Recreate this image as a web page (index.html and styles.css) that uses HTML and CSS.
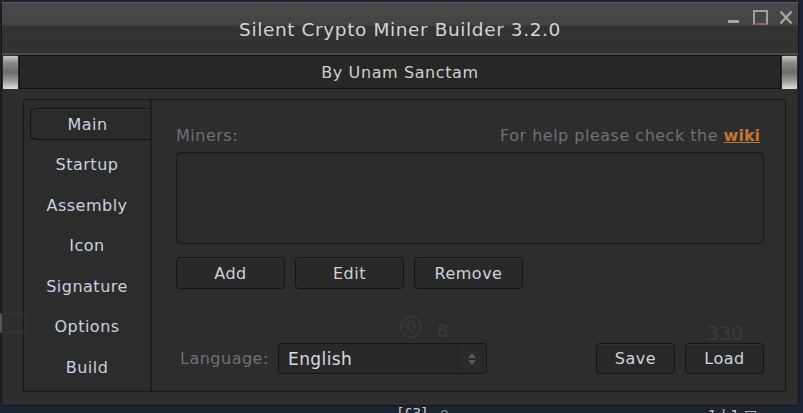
FILE: index.html
```html
<!DOCTYPE html>
<html lang="en">
<head>
  <meta charset="UTF-8" />
  <title>Silent Crypto Miner Builder 3.2.0</title>
  <link rel="stylesheet" href="styles.css">
</head>
<body>

  <div class="window">
    <div class="titlebar">
      <span class="title">Silent Crypto Miner Builder 3.2.0</span>
      <div class="win-controls">
        <span class="ctl-min"></span>
        <span class="ctl-max"></span>
        <svg class="ctl-close" width="14" height="15" viewBox="0 0 14 15">
          <path d="M1.5 1.5 L12.5 13.5 M12.5 1.5 L1.5 13.5" stroke="#a8a8a8" stroke-width="2.2" fill="none"/>
        </svg>
      </div>
    </div>

    <div class="byline">
      <span class="thumb"></span>
      <div class="byline-text">By Unam Sanctam</div>
      <span class="thumb"></span>
    </div>

    <div class="body">
      <div class="tabs">
        <nav class="tab-list">
          <div class="tab-item selected">Main</div>
          <div class="tab-item">Startup</div>
          <div class="tab-item">Assembly</div>
          <div class="tab-item">Icon</div>
          <div class="tab-item">Signature</div>
          <div class="tab-item">Options</div>
          <div class="tab-item">Build</div>
        </nav>

        <section class="tab-page">
          <div class="page-head">
            <span class="muted">Miners:</span>
            <span class="muted">For help please check the <a class="wiki" href="#">wiki</a></span>
          </div>
          <div class="miner-list"></div>
          <div class="list-actions">
            <button class="btn">Add</button>
            <button class="btn">Edit</button>
            <button class="btn">Remove</button>
          </div>

          <div class="page-foot">
            <span class="muted lang-label">Language:</span>
            <div class="combo">
              <span class="combo-value">English</span>
              <span class="combo-arrow">
                <svg width="10" height="14" viewBox="0 0 10 14">
                  <path d="M5 1 L9 6 L1 6 Z M1 8 L9 8 L5 13 Z" fill="#565656"/>
                </svg>
              </span>
            </div>
            <div class="foot-actions">
              <button class="btn btn-small">Save</button>
              <button class="btn btn-small">Load</button>
            </div>
          </div>

          <!-- faint shapes of the window behind, seen through -->
          <svg class="ghost ghost-icon" width="22" height="22" viewBox="0 0 22 22">
            <circle cx="11" cy="11" r="10" stroke="#393939" stroke-width="1.5" fill="none"/>
            <path d="M8.5 5 L13.5 5 L13.5 10 L16 10 L11 16 L6 10 L8.5 10 Z" stroke="#393939" stroke-width="1.3" fill="none"/>
          </svg>
          <span class="ghost ghost-8">8</span>
          <span class="ghost ghost-330">330</span>
        </section>
      </div>
    </div>
  </div>

  <span class="ghost-box"></span>

  <div class="taskbar">
    <span class="task-a">[£3]</span>
    <span class="task-b">8</span>
    <span class="task-c">1 | 1 □</span>
  </div>

</body>
</html>
```

FILE: styles.css
```css
html, body {
  margin: 0;
  padding: 0;
}

body {
  width: 803px;
  height: 413px;
  overflow: hidden;
  background-color: #1c2433;
  font-family: "DejaVu Sans", "Open Sans", sans-serif;
  color: #cdd4de;
  position: relative;
}

.window {
  margin: 2px 4px 0 1px;
  height: 404px;
  background-color: #2e2e2e;
  border: 1px solid #151515;
  border-top-color: #5a5a5a;
  box-sizing: border-box;
}

.titlebar {
  position: relative;
  height: 50px;
  background: linear-gradient(#4a4a4a 0, #444 22px, #333 23px, #323232 100%);
  border-bottom: 2px solid #4c4c4c;
  display: flex;
  align-items: center;
  justify-content: center;
}

.title {
  font-size: 18.5px;
  letter-spacing: 0.6px;
  color: #d4d4d4;
  margin-top: 2px;
}

.win-controls {
  position: absolute;
  top: 7px;
  right: 5px;
  display: flex;
  align-items: flex-end;
}

.ctl-min {
  width: 11px;
  height: 3px;
  background-color: #a8a8a8;
  margin: 0 14px 2px 0;
}

.ctl-max {
  width: 15px;
  height: 15px;
  box-sizing: border-box;
  border: 2px solid #a0a0a0;
  border-bottom-color: #8a6464;
  margin-right: 11px;
}

.byline {
  display: flex;
  height: 34px;
}

.thumb {
  width: 15px;
  margin: 1px 1px 0;
  background: linear-gradient(#c8c8c8 0, #8a8a8a 20%, #6c6c6c 50%, #9a9a9a 75%, #e0e0e0 100%);
  border-radius: 1px;
}

.byline-text {
  flex: 1;
  display: flex;
  align-items: center;
  justify-content: center;
  background-color: #272727;
  border: 1px solid #121212;
  font-size: 16px;
  letter-spacing: 0.6px;
  color: #d0d0d0;
}

.body {
  padding: 10px 12px 0 21px;
}

.tabs {
  display: flex;
  height: 293px;
  border: 1px solid #1a1a1a;
  box-sizing: border-box;
  background-color: #2c2c2c;
}

.tab-list {
  width: 128px;
  padding: 8px 0 0 6px;
  box-sizing: border-box;
  border-right: 2px solid #1e1e1e;
  display: flex;
  flex-direction: column;
  gap: 8.5px;
}

.tab-item {
  height: 32px;
  padding-right: 6px;
  display: flex;
  align-items: center;
  justify-content: center;
  font-size: 16px;
  letter-spacing: 0.5px;
  color: #c9d2e0;
  box-sizing: border-box;
}

.tab-item.selected {
  background-color: #2a2a2a;
  border: 1px solid #141414;
  border-right: none;
  border-radius: 6px 0 0 6px;
  box-shadow: inset 0 1px 0 #343434;
}

.tab-page {
  position: relative;
  flex: 1;
  padding: 24px 21px 17px 24px;
  display: flex;
  flex-direction: column;
  background-color: #2d2d2d;
}

.page-head {
  display: flex;
  justify-content: space-between;
  align-items: center;
  height: 22px;
  padding-right: 4px;
}

.muted {
  font-size: 16px;
  letter-spacing: 0.5px;
  color: #6f7078;
}

.wiki {
  color: #c47434;
  font-weight: bold;
  letter-spacing: 0;
  text-decoration: underline;
}

.miner-list {
  margin-top: 6px;
  height: 92px;
  background-color: #2b2b2b;
  border: 1px solid #1a1a1a;
  border-radius: 4px;
  box-sizing: border-box;
  box-shadow: inset 0 1px 0 #262626;
}

.list-actions {
  display: flex;
  gap: 10px;
  margin-top: 13px;
}

.btn {
  width: 109px;
  height: 32px;
  margin: 0;
  padding: 0;
  background-color: #292929;
  border: 1px solid #151515;
  border-radius: 4px;
  box-shadow: inset 0 1px 0 #333;
  font-family: inherit;
  font-size: 16px;
  letter-spacing: 0.5px;
  color: #cdd4de;
  cursor: pointer;
}

.page-foot {
  margin-top: auto;
  display: flex;
  align-items: center;
  height: 31px;
}

.lang-label {
  margin-left: 4px;
  width: 98px;
}

.combo {
  width: 209px;
  height: 31px;
  display: flex;
  background-color: #292929;
  border: 1px solid #161616;
  border-radius: 4px;
  box-sizing: border-box;
}

.combo-value {
  flex: 1;
  display: flex;
  align-items: center;
  padding-left: 9px;
  font-size: 17px;
  letter-spacing: 0.4px;
  color: #d6dbe4;
}

.combo-arrow {
  width: 28px;
  display: flex;
  align-items: center;
  justify-content: center;
  border-left: 1px solid #232323;
}

.foot-actions {
  margin-left: auto;
  display: flex;
  gap: 10px;
}

.btn-small {
  width: 79px;
  height: 31px;
}

.ghost {
  position: absolute;
  color: #3a3a3a;
  font-size: 18px;
}

.ghost-icon {
  left: 248px;
  top: 216px;
}

.ghost-8 {
  left: 285px;
  top: 220px;
}

.ghost-330 {
  left: 555px;
  top: 222px;
  font-size: 19px;
}

.ghost-box {
  position: absolute;
  left: 0;
  top: 313px;
  width: 26px;
  height: 20px;
  border: 1px solid #353535;
  border-left: 2px solid #4d5852;
  box-sizing: border-box;
}

.taskbar {
  position: absolute;
  left: 0;
  right: 0;
  top: 406px;
  height: 7px;
  overflow: hidden;
  font-size: 14px;
  line-height: 14px;
  color: #c8ccd4;
}

.task-a {
  position: absolute;
  left: 398px;
  top: 0;
}

.task-b {
  position: absolute;
  left: 440px;
  top: 2px;
  color: #8a8f9a;
}

.task-c {
  position: absolute;
  left: 708px;
  top: 2px;
}
```
